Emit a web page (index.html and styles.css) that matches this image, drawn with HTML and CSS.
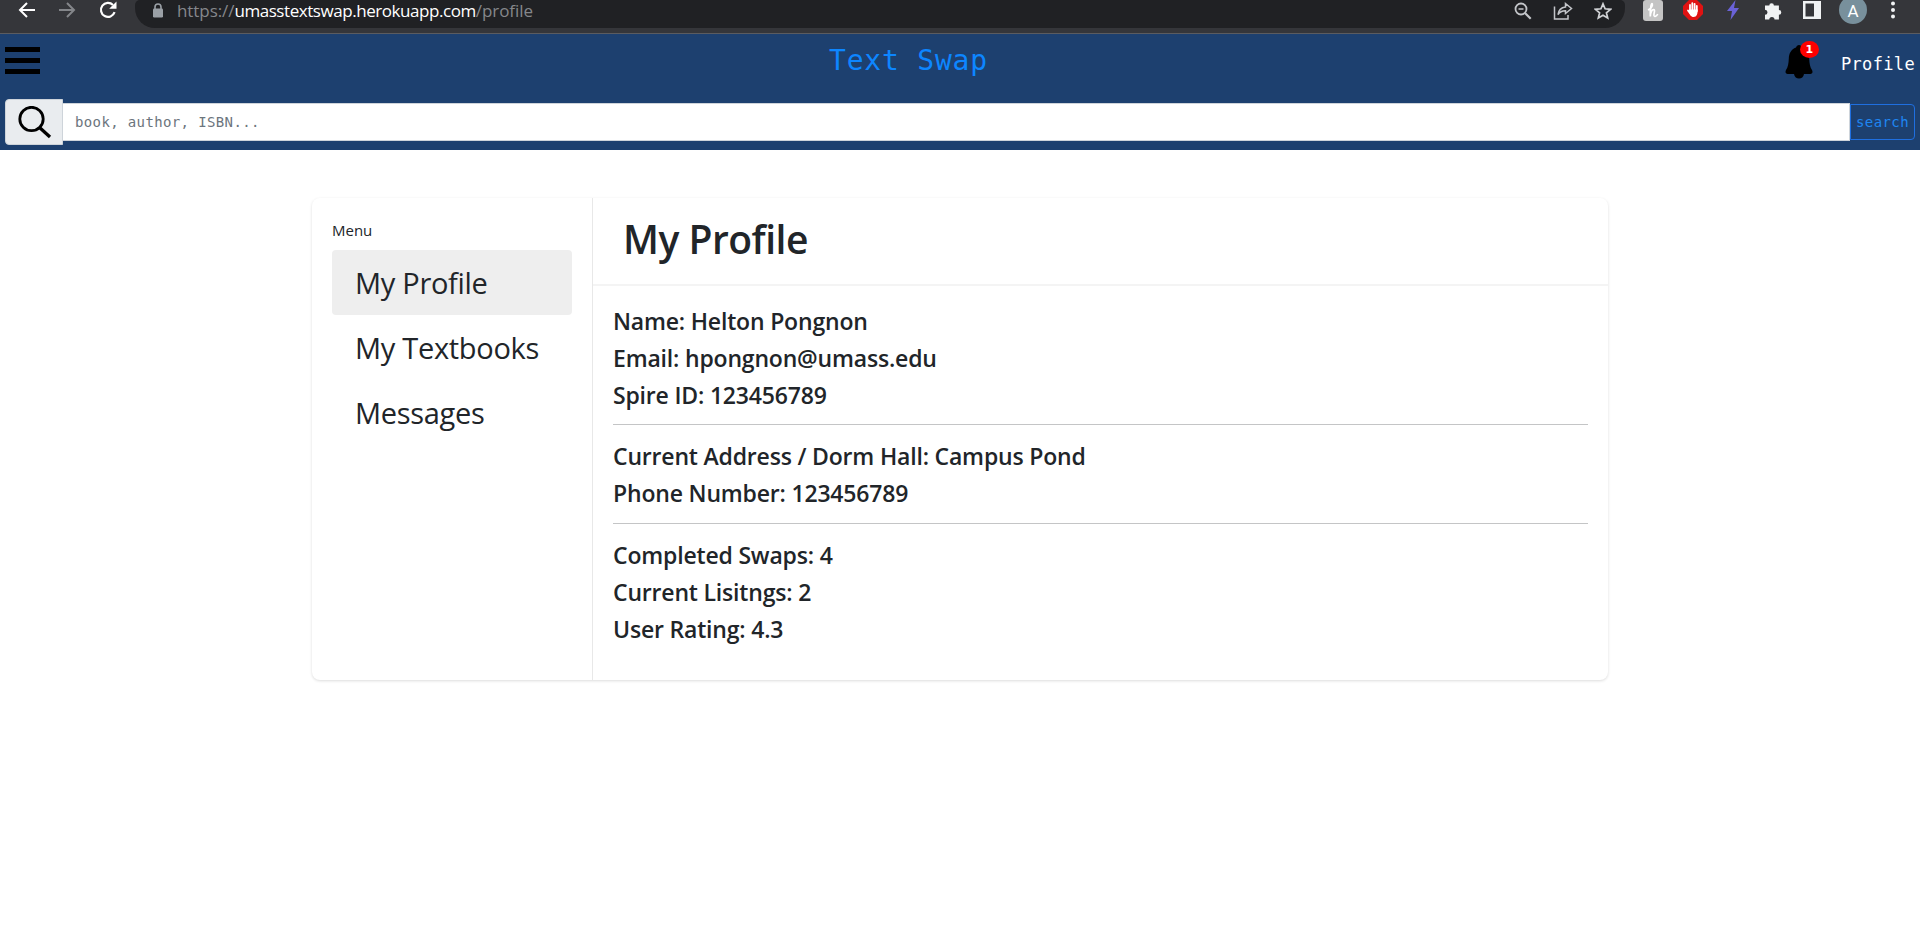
FILE: index.html
```
<!DOCTYPE html>
<html lang="en">
<head>
<meta charset="utf-8">
<title>Text Swap</title>
<link rel="stylesheet" href="styles.css">
</head>
<body>
<div class="chrome">
  <div class="chrome-nav">
    <svg width="18" height="18" viewBox="0 0 18 18"><path d="M17 9H2M9 2L2 9l7 7" fill="none" stroke="#fff" stroke-width="2"/></svg>
    <svg class="fwd" width="18" height="18" viewBox="0 0 18 18"><path d="M1 9h15M9 2l7 7-7 7" fill="none" stroke="#84868a" stroke-width="2"/></svg>
    <svg class="reload" width="18" height="18" viewBox="0 0 18 18"><path d="M15.6 11.2A7 7 0 1 1 14 4" fill="none" stroke="#fff" stroke-width="2.2"/><path d="M17.500 .5v7.300h-7.300z" fill="#fff"/></svg>
  </div>
  <div class="omnibox">
    <svg class="lock" width="12" height="16" viewBox="0 0 12 16"><path d="M3 6V4a3 3 0 0 1 6 0v2" fill="none" stroke="#9aa0a6" stroke-width="1.600"/><rect x="1" y="5.500" width="10" height="9" rx="1.200" fill="#9aa0a6"/></svg>
    <span class="url"><span class="scheme">https://</span><span class="host">umasstextswap.herokuapp.com</span><span class="path">/profile</span></span>
    <span class="omni-icons">
      <svg width="18" height="18" viewBox="0 0 18 18" fill="none" stroke="#c3c5c9"><circle cx="7" cy="7" r="5.500" stroke-width="1.800"/><path d="M11 11l5.700 5.700" stroke-width="2.200"/><path d="M4.500 7h5" stroke-width="1.500"/></svg>
      <svg width="20" height="20" viewBox="0 0 20 20" fill="none" stroke="#c3c5c9" stroke-width="1.500"><path d="M1.500 4.500V17h13.500v-4"/><path d="M12.500 1.500l6 5-6 5V8.700c-4 0-6 1.300-7.500 4 .5-4.500 3.500-7.200 7.500-7.700z"/></svg>
      <svg width="18" height="18" viewBox="0 0 18 18" fill="none" stroke="#d0d2d5" stroke-width="1.700"><path d="M9 1.800l2.100 5 5.400.5-4.100 3.500 1.300 5.300L9 13.300l-4.700 2.800 1.300-5.300-4.100-3.500 5.400-.5z"/></svg>
    </span>
  </div>
  <div class="exts">
    <svg width="20" height="21" viewBox="0 0 20 21"><rect width="20" height="21" rx="3" fill="#c4c4c4"/><path d="M5 10c2.500-1 5-4 4.300-6C8.500 2.500 7 7 7.300 16.500 7.500 12 9 9.500 10.800 9.700c1.700.3-.3 4 .2 5.800.5 1.500 2.500 1 3.700-1.500" fill="none" stroke="#fff" stroke-width="1.700"/></svg>
    <svg class="hand" width="20" height="20" viewBox="0 0 20 20"><path d="M6 0h8l6 6v8l-6 6H6l-6-6V6z" fill="#e01212"/><path d="M7 11V5M9.300 10V3.200M11.600 10V3.800M13.800 11V6M5 10.500l3 4" stroke="#fff" stroke-width="1.800" stroke-linecap="round"/><path d="M6.200 9.500h8.500c0 4-.8 7.500-4.200 7.500-2.500 0-4.300-2-4.300-7.500z" fill="#fff"/></svg>
    <svg class="bolt" width="12" height="20" viewBox="0 0 12 20"><path d="M8.500 0L0 11h5L3.500 20 12 8H7z" fill="#6a62d8"/></svg>
    <svg class="puzzle" width="18" height="19" viewBox="0 0 18 19"><path d="M1 4.500h4.300a2.300 2.300 0 1 1 4.600 0h5V9a2.400 2.400 0 1 1 0 4.800V18.500h-4.400a2.600 2.600 0 0 0-5.200 0H1v-4.700a2.500 2.500 0 0 0 0-5z" fill="#f1f3f4"/></svg>
    <svg class="panel" width="18" height="18" viewBox="0 0 18 18"><path d="M0 0h18v18H0zM2.500 2.500v13H11v-13z" fill="#f1f3f4" fill-rule="evenodd"/></svg>
    <span class="avatar">A</span>
    <svg class="dots" width="4" height="18" viewBox="0 0 4 18" fill="#f1f3f4"><circle cx="2" cy="2.500" r="2"/><circle cx="2" cy="9" r="2"/><circle cx="2" cy="15.500" r="2"/></svg>
  </div>
</div>
<header class="nav">
  <div class="nav-top">
    <svg class="burger" width="35" height="27" viewBox="0 0 35 27"><path d="M0 0h35v5H0zM0 11h35v5H0zM0 22h35v5H0z"/></svg>
    <div class="brand">Text Swap</div>
    <div class="bell">
      <svg width="28" height="34" viewBox="0 0 28 34"><path d="M14 0c1.500 0 2.500 1 3 2.500 5 2 7 6 7.200 11 .2 5 .8 8.500 2.800 11.500 1 1.700.5 4-1.500 4H19c-.5 3-2.500 4.500-5 4.500S9.500 32 9 29H2.500C.5 29 0 26.700 1 25c2-3 2.600-6.500 2.800-11.500C4 8.500 6 4.500 11 2.500 11.500 1 12.500 0 14 0z"/></svg>
      <span class="badge">1</span>
    </div>
    <a class="profile-link">Profile</a>
  </div>
  <div class="search">
    <span class="search-icon"><svg width="34" height="33" viewBox="0 0 34 33" fill="none" stroke="#000"><circle cx="13.500" cy="13" r="11.700" stroke-width="2.800"/><path d="M21.500 21.500l10.500 9.500" stroke-width="3.300"/></svg></span>
    <div class="search-input">book, author, ISBN...</div>
    <div class="search-btn">search</div>
  </div>
</header>
<main class="card">
  <aside class="side">
    <div class="side-label">Menu</div>
    <div class="item active">My Profile</div>
    <div class="item">My Textbooks</div>
    <div class="item">Messages</div>
  </aside>
  <section class="main">
    <h1 class="title">My Profile</h1>
    <div class="details">
      <div class="group"><p>Name: Helton Pongnon</p><p>Email: hpongnon@umass.edu</p><p>Spire ID: 123456789</p></div>
      <div class="group"><p>Current Address / Dorm Hall: Campus Pond</p><p>Phone Number: 123456789</p></div>
      <div class="group"><p>Completed Swaps: 4</p><p>Current Lisitngs: 2</p><p>User Rating: 4.3</p></div>
    </div>
  </section>
</main>
</body>
</html>
```
FILE: styles.css
```
* { box-sizing: border-box; }
body { margin: 0; min-height: 100vh; background: #fff; color: #212529; font-family: "Open Sans", "Noto Sans", sans-serif; }
svg { display: block; flex: none; }
.chrome { display: flex; height: 34px; background: #35363a; border-bottom: 1px solid #5b5c60; }
.chrome-nav { display: flex; flex: none; width: 135px; padding: 1px 0 0 18px; }
.fwd { margin-left: 22px; }
.reload { margin-left: 23px; }
.omnibox { display: flex; flex: none; width: 1490px; height: 28px; background: #202124; border-radius: 5px 5px 20px 20px; padding-left: 17px; }
.lock { margin-top: 3px; }
.url { margin-left: 13px; font-size: 17px; line-height: 22px; white-space: nowrap; }
.scheme, .path { color: #85878b; letter-spacing: -.07px; }
.host { color: #fff; letter-spacing: -.44px; }
.omni-icons { display: flex; gap: 21px; margin-left: auto; padding: 2px 13px 0 0; }
.exts { display: flex; flex: 1; align-items: center; height: 20px; padding-left: 18px; }
.hand { margin-left: 20px; }
.bolt { margin-left: 24px; }
.puzzle { margin-left: 25px; }
.panel { margin-left: 21px; }
.dots { margin-left: 24px; }
.avatar { flex: none; width: 28px; height: 28px; margin-left: 18px; border-radius: 50%; background: #78909c; color: #fff; font: 17px/30px Roboto, sans-serif; text-align: center; }
.nav { height: 116px; background: #1d406f; color: #fff; font-family: "DejaVu Sans Mono", monospace; }
.nav-top { display: flex; height: 65px; padding: 0 5px; }
.burger { margin-top: 13px; }
.brand { flex: 1; color: #0d86ff; font-size: 28px; letter-spacing: .8px; line-height: 54px; padding-left: 789px; }
.bell { position: relative; flex: none; width: 28px; margin-top: 11px; }
.badge { position: absolute; left: 15px; top: -4px; width: 19px; height: 17px; border-radius: 50%; background: #f00; font: bold 11px/17px "DejaVu Sans", sans-serif; text-align: center; }
.profile-link { margin-left: 28px; font-size: 17px; letter-spacing: .35px; line-height: 60px; }
.search { display: flex; align-items: center; height: 46px; padding: 0 5px; }
.search-icon { flex: none; width: 58px; height: 46px; padding: 6px 0 0 12px; background: #e9ecef; border: 1px solid #ced4da; border-radius: 4px 0 0 4px; }
.search-input { flex: 1; height: 38px; border: 1px solid #ced4da; border-left: 0; background: #fff; color: #6c757d; font-size: 14px; letter-spacing: .37px; line-height: 36px; padding-left: 12px; }
.search-btn { width: 65px; height: 36px; border: 1px solid #1f6fe0; border-radius: 0 4px 4px 0; color: #1f86f2; font-size: 14px; letter-spacing: .4px; line-height: 34px; padding-left: 5px; }
.card { display: flex; width: 1296px; height: 482px; margin: 48px 0 0 312px; border-radius: 8px; box-shadow: 0 1px 3px rgba(0,0,0,.14); }
.side { flex: none; width: 281px; padding: 20px 20px 0; border-right: 1px solid #e8e8e8; }
.side-label { font-size: 15px; line-height: 24px; height: 32px; }
.item { height: 65px; border-radius: 4px; padding-left: 23px; font-size: 29px; letter-spacing: -.3px; line-height: 66px; white-space: nowrap; }
.active { background: #eee; }
.main { flex: 1; }
.title { height: 88px; margin: 0; border-bottom: 2px solid #f4f4f4; padding-left: 30px; font-size: 39px; font-weight: 600; letter-spacing: -.5px; line-height: 81px; }
.details { padding: 20px; }
.group p { margin: 0; font-size: 23px; font-weight: 600; letter-spacing: -.18px; line-height: 30.8px; }
.group p + p { margin-top: 6px; }
.group + .group { margin-top: 14px; padding-top: 16px; border-top: 1px solid #c4c5c6; }
```
